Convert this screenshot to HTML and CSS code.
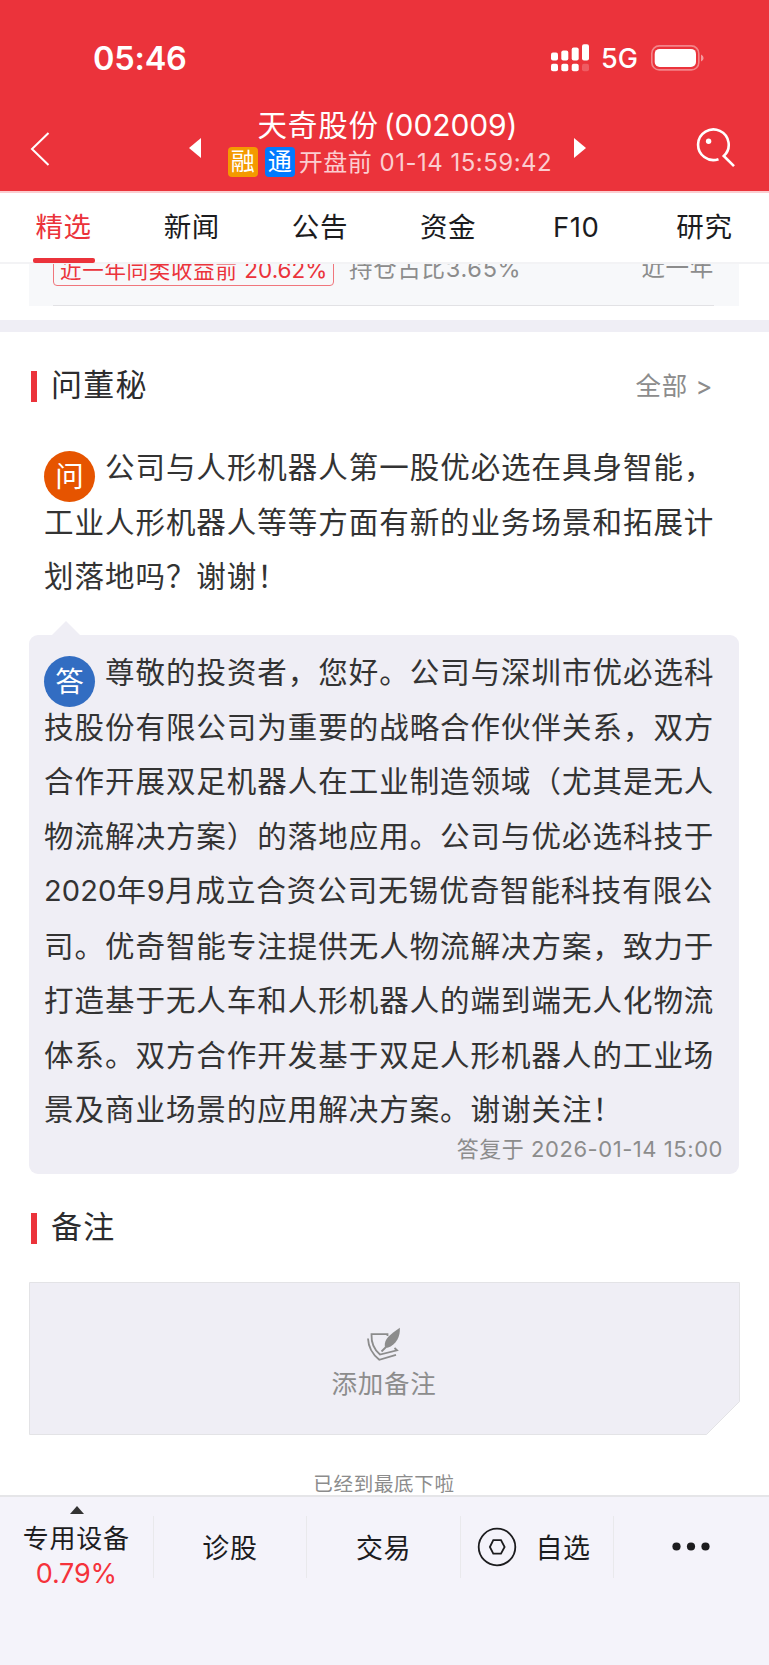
FILE: index.html
```html
<!DOCTYPE html>
<html lang="zh-CN">
<head>
  <meta charset="UTF-8">
  <title>天奇股份(002009)</title>
  <link rel="stylesheet" href="styles.css">
</head>
<body>
  <header class="top">
    <div class="status-bar">
      <span class="time">05:46</span>
      <svg class="signal" width="38" height="28" viewBox="0 0 38 28" fill="#fff">
        <rect x="0" y="8.5" width="7" height="8" rx="2"/>
        <rect x="10.3" y="6.5" width="7" height="10" rx="2"/>
        <rect x="20.7" y="3.5" width="7" height="13" rx="2"/>
        <rect x="31" y="0.3" width="7" height="16.2" rx="2"/>
        <rect x="0" y="19.7" width="7" height="7.5" rx="2"/>
        <rect x="10.3" y="19.7" width="7" height="7.5" rx="2"/>
        <rect x="20.7" y="19.7" width="7" height="7.5" rx="2"/>
        <rect x="31" y="19.7" width="7" height="7.5" rx="2" opacity="0.2"/>
      </svg>
      <span class="network">5G</span>
      <svg class="battery" width="53" height="26" viewBox="0 0 53 26">
        <rect x="0.8" y="0.9" width="47" height="24" rx="7.5" fill="none" stroke="#fff" stroke-width="1.6" opacity="0.4"/>
        <rect x="3.7" y="3.9" width="41.3" height="18" rx="5" fill="#fff"/>
        <path d="M50 9.5 Q52.6 10.5 52.6 13 T50 16.5 Z" fill="#fff" opacity="0.5"/>
      </svg>
    </div>
    <div class="nav-bar">
      <svg class="back" width="20" height="34" viewBox="0 0 20 34" fill="none" stroke="#fff" stroke-width="2">
        <path d="M18.5 1 L2 17 L18.5 33"/>
      </svg>
      <svg class="prev" width="12" height="20" viewBox="0 0 12 20" fill="#fff"><path d="M12 0 V20 L0 10 Z"/></svg>
      <div class="stock">
        <div class="stock-name">天奇股份<span class="code">(002009)</span></div>
        <div class="stock-info">
          <span class="tag orange">融</span>
          <span class="tag blue">通</span>
          <span class="session">开盘前 01-14 15:59:42</span>
        </div>
      </div>
      <svg class="next" width="12" height="20" viewBox="0 0 12 20" fill="#fff"><path d="M0 0 V20 L12 10 Z"/></svg>
      <svg class="search" width="40" height="40" viewBox="0 0 40 40" fill="none" stroke="#fff" stroke-width="2.6">
        <path d="M22.5 31.2 A15.3 15.3 0 1 1 27.8 28 L38 38.2"/>
        <circle cx="12.6" cy="13.2" r="2.7" fill="#fff" stroke="none"/>
      </svg>
    </div>
  </header>

  <nav class="tabs">
    <div class="tab active">精选</div>
    <div class="tab">新闻</div>
    <div class="tab">公告</div>
    <div class="tab">资金</div>
    <div class="tab">F10</div>
    <div class="tab">研究</div>
  </nav>

  <main class="content">
    <section class="fund">
      <div class="fund-row">
        <span class="rank">近一年同类收益前 <b>20.62%</b></span>
        <span class="ratio">持仓占比3.65%</span>
        <span class="period">近一年</span>
      </div>
    </section>

    <section class="qa">
      <div class="section-title">
        <h2>问董秘</h2>
        <span class="more">全部 &gt;</span>
      </div>
      <p class="question"><span class="avatar ask">问</span>公司与人形机器人第一股优必选在具身智能，工业人形机器人等等方面有新的业务场景和拓展计划落地吗？谢谢！</p>
      <div class="answer">
        <p><span class="avatar reply">答</span>尊敬的投资者，您好。公司与深圳市优必选科技股份有限公司为重要的战略合作伙伴关系，双方合作开展双足机器人在工业制造领域（尤其是无人物流解决方案）的落地应用。公司与优必选科技于<span class="num">2020</span>年<span class="num">9</span>月成立合资公司无锡优奇智能科技有限公司。优奇智能专注提供无人物流解决方案，致力于打造基于无人车和人形机器人的端到端无人化物流体系。双方合作开发基于双足人形机器人的工业场景及商业场景的应用解决方案。谢谢关注！</p>
        <div class="answer-time">答复于 2026-01-14 15:00</div>
      </div>
    </section>

    <section class="note">
      <div class="section-title">
        <h2>备注</h2>
      </div>
      <div class="note-box">
        <svg class="note-bg" width="711" height="153" viewBox="0 0 711 153">
          <path d="M0.5 0.5 H710.5 V119.5 L677.5 152.5 H0.5 Z" fill="#efeef5" stroke="#e3e3e6"/>
        </svg>
        <svg class="note-icon" width="34" height="36" viewBox="0 0 34 36" fill="none" stroke="#8c8c8c" stroke-width="1.8">
          <path d="M20.5 9 V7.2 H4.5 Q4 20 13 27.5 L30 23.3 L27.5 21"/>
          <path d="M1 11.5 Q1.5 24 12.3 32.8 L29 27.8"/>
          <path d="M14.5 24.5 L21 18"/>
          <path d="M32.8 0.8 C33.5 9 29.5 18 20.5 20.8 L17.8 19.5 C17 12 23 7.5 32.8 0.8 Z" fill="#8c8c8c" stroke="none"/>
        </svg>
        <div class="note-text">添加备注</div>
      </div>
    </section>
    <div class="page-end">已经到最底下啦</div>
  </main>

  <footer class="toolbar">
    <div class="tool industry">
      <i class="arrow-up"></i>
      <span class="industry-name">专用设备</span>
      <span class="industry-rate">0.79%</span>
    </div>
    <div class="tool">诊股</div>
    <div class="tool">交易</div>
    <div class="tool favorite">
      <svg width="40" height="40" viewBox="0 0 40 40" fill="none" stroke="#1c1c1e" stroke-width="1.8">
        <circle cx="20" cy="20" r="18.3"/>
        <path d="M12.9 20 L16.3 13.2 H24 L27.6 20 L24 26.7 H16.3 Z"/>
      </svg>
      <span>自选</span>
    </div>
    <div class="tool">
      <svg width="38" height="9" viewBox="0 0 38 9" fill="#1c1c1e">
        <circle cx="4.5" cy="4.5" r="4.1"/><circle cx="19" cy="4.5" r="4.1"/><circle cx="33.5" cy="4.5" r="4.1"/>
      </svg>
    </div>
  </footer>
</body>
</html>
```

FILE: styles.css
```css
* {
  box-sizing: border-box;
}
body {
  margin: 0;
  width: 769px;
  height: 1665px;
  overflow: hidden;
  display: flex;
  flex-direction: column;
  background: #fff;
  color: #333;
  font-family: Inter, "Noto Sans CJK SC", sans-serif;
}
svg {
  display: block;
  flex: none;
}
h2, p {
  margin: 0;
}

/* header */
.top {
  height: 193px;
  flex: none;
  background: #eb333b;
  border-bottom: 2px solid #fbcdd0;
  color: #fff;
}
.status-bar {
  height: 110px;
  display: flex;
  align-items: center;
  padding: 5px 65px 0 93px;
}
.time {
  padding-top: 2px;
  font-size: 32.5px;
  font-weight: 600;
  line-height: 40px;
  letter-spacing: -0.2px;
}
.signal {
  margin-left: auto;
}
.network {
  width: 39px;
  margin: 2px 11px 0 12px;
  font-size: 27px;
  font-weight: 500;
}
.nav-bar {
  height: 81px;
  display: flex;
  align-items: flex-start;
  padding: 0 33px 0 30px;
}
.back {
  margin-top: 22px;
}
.prev {
  margin: 28px 0 0 139px;
}
.stock {
  width: 373px;
  text-align: center;
}
.stock-name {
  height: 34px;
  line-height: 31px;
  font-size: 29.5px;
  letter-spacing: 0.8px;
  white-space: nowrap;
}
.code {
  margin-left: 5px;
  font-size: 30px;
  letter-spacing: -0.1px;
}
.stock-info {
  height: 36px;
  padding-left: 5px;
  display: flex;
  align-items: center;
  justify-content: center;
}
.tag {
  width: 30px;
  height: 30px;
  margin-right: 7px;
  border-radius: 4px;
  font-size: 24px;
  line-height: 30px;
  text-align: center;
}
.orange {
  background: #f49a00;
}
.blue {
  margin-right: 4px;
  background: #007aff;
}
.session {
  padding-top: 1px;
  color: #fbcdd0;
  font-size: 24px;
  line-height: 30px;
  letter-spacing: 0.5px;
  white-space: nowrap;
}
.next {
  margin-top: 28px;
}
.search {
  margin: 18px 0 0 auto;
}

/* tabs */
.tabs {
  position: relative;
  z-index: 1;
  height: 71px;
  flex: none;
  display: flex;
  background: #fff;
  border-bottom: 2px solid #f3f3f5;
}
.tab {
  position: relative;
  flex: 1;
  padding-right: 1px;
  text-align: center;
  color: #1c1c1e;
  font-size: 27.5px;
  line-height: 69px;
  letter-spacing: 0.6px;
}
.active {
  color: #eb333b;
}
.active::after {
  content: "";
  position: absolute;
  left: 33px;
  bottom: -1px;
  width: 62px;
  height: 5px;
  border-radius: 2px;
  background: #eb333b;
}

/* fund card, scrolled under the tabs */
.content {
  flex: 1;
  min-height: 0;
  overflow: hidden;
}
.fund {
  height: 68px;
  padding: 0 30px 0 29px;
  border-bottom: 12px solid #efeef5;
}
.fund-row {
  height: 42px;
  display: flex;
  align-items: flex-end;
  padding: 0 25px 0 24px;
  background: linear-gradient(#e2e2e5, #e2e2e5) 24px 100% / 661px 1px no-repeat #f7f8fa;
  color: #8c8c8c;
  font-size: 23.5px;
  line-height: 30px;
  letter-spacing: 0.7px;
  white-space: nowrap;
}
.rank {
  width: 281px;
  height: 32px;
  margin-bottom: 20px;
  padding-left: 6px;
  border: 1px solid #f0767c;
  border-radius: 4px;
  color: #eb333b;
  font-size: 21.5px;
  letter-spacing: 0.7px;
}
.rank b {
  font-size: 22.5px;
  font-weight: 400;
  letter-spacing: 0;
}
.ratio {
  margin: 0 0 22px 15px;
}
.period {
  margin: 0 0 23px auto;
}

/* section titles */
.section-title {
  display: flex;
  align-items: center;
  justify-content: space-between;
  height: 32px;
  padding: 0 56px 0 31px;
}
.section-title h2 {
  border-left: 6.5px solid #eb333b;
  padding: 0 0 4px 14px;
  color: #2c2c2e;
  font-size: 31px;
  font-weight: 400;
  line-height: 27px;
  letter-spacing: 1.2px;
}
.more {
  padding-bottom: 5px;
  color: #8c8c8c;
  font-size: 25.5px;
  letter-spacing: 0.6px;
}

/* question and answer */
.qa {
  padding-top: 38px;
}
.question,
.answer p {
  font-size: 29.5px;
  line-height: 54.5px;
  letter-spacing: 0.97px;
}
.question {
  height: 164px;
  margin: 38px 48px 0 44px;
}
.avatar {
  float: left;
  width: 51px;
  height: 51px;
  margin: 11px 10px -10px 0;
  border-radius: 50%;
  color: #fff;
  font-size: 28.5px;
  line-height: 52px;
  letter-spacing: 0;
  text-align: center;
}
.ask {
  background: #e65400;
}
.reply {
  background: #326dc2;
}
.num {
  font-size: 29px;
  letter-spacing: 0.1px;
}
.answer {
  position: relative;
  height: 539px;
  margin: 31px 30px 0 29px;
  padding: 10px 16px 0 15px;
  border-radius: 9px;
  background: #efeef5;
}
.answer::before {
  content: "";
  position: absolute;
  left: 23px;
  top: -14px;
  border: solid transparent;
  border-width: 0 14px 14px;
  border-bottom-color: #efeef5;
}
.answer p {
  height: 492px;
  margin-right: -10px;
}
.answer-time {
  color: #8c8c8c;
  font-size: 22px;
  line-height: 24px;
  letter-spacing: 0.55px;
  text-align: right;
}

/* note */
.note {
  padding-top: 38px;
}
.note-box {
  position: relative;
  width: 711px;
  height: 153px;
  margin: 38px 0 0 29px;
  padding-top: 45px;
  display: flex;
  flex-direction: column;
  align-items: center;
}
.note-bg {
  position: absolute;
  left: 0;
  top: 0;
}
.note-icon {
  position: relative;
  margin-right: 1px;
}
.note-text {
  position: relative;
  margin: 3px 1px 0 0;
  color: #8c8c8c;
  font-size: 25.5px;
  line-height: 36px;
  letter-spacing: 0.8px;
}
.page-end {
  margin-top: 35px;
  padding-right: 1px;
  color: #8c8c8c;
  font-size: 19.5px;
  line-height: 29px;
  letter-spacing: 0.7px;
  text-align: center;
}

/* bottom toolbar */
.toolbar {
  height: 170px;
  flex: none;
  display: flex;
  padding-top: 19px;
  background: #f4f3fa;
  border-top: 2px solid #e5e5e8;
}
.tool {
  width: 153.6px;
  flex: none;
  height: 62px;
  display: flex;
  align-items: center;
  justify-content: center;
  padding-bottom: 1px;
  border-right: 1.5px solid #e9e9ec;
  color: #1c1c1e;
  font-size: 27px;
  letter-spacing: 0.6px;
  white-space: nowrap;
}
.tool:last-child {
  border-right: 0;
}
.industry {
  flex-direction: column;
  justify-content: flex-start;
}
.arrow-up {
  margin: -10px 0 0 1px;
  border: solid transparent;
  border-width: 0 7px 8px;
  border-bottom-color: #333;
}
.industry-name {
  margin-top: 8px;
  font-size: 26px;
  line-height: 34px;
  letter-spacing: 0.8px;
}
.industry-rate {
  color: #f5323b;
  font-size: 27px;
  line-height: 36px;
  letter-spacing: -0.2px;
}
.favorite {
  gap: 18px;
  padding-right: 6px;
}
```
